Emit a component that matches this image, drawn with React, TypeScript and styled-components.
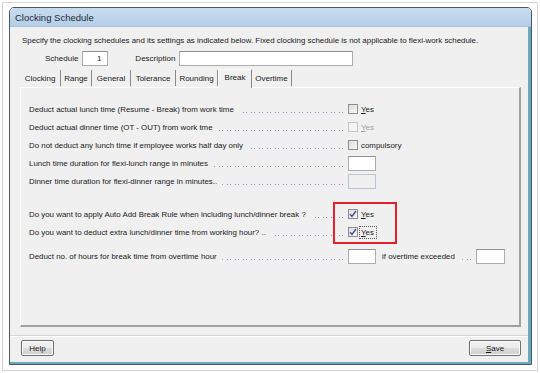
import React from "react";
import styled, { createGlobalStyle } from "styled-components";

const GlobalStyle = createGlobalStyle`
  html, body {
    margin: 0;
    padding: 0;
    background: #ffffff;
  }
  body {
    font-family: "Liberation Sans", Arial, sans-serif;
    color: #1a1a1a;
  }
  * {
    box-sizing: border-box;
  }
`;

const Page = styled.div`
  width: 540px;
  height: 373px;
  padding: 2px;
`;

const Frame = styled.div`
  height: 369px;
  border: 1px solid #d4d4d4;
  padding: 4px 5px 5px 6px;
`;

const Window = styled.div`
  height: 358px;
  display: flex;
  flex-direction: column;
  border: 1px solid #4b5864;
  border-radius: 5px 5px 0 0;
  overflow: hidden;
`;

const TitleBar = styled.div`
  height: 19px;
  flex-shrink: 0;
  display: flex;
  align-items: center;
  padding-left: 5px;
  font-size: 9.5px;
  color: #1e2a36;
  background: linear-gradient(#c9dcef, #b4cde7);
  border-bottom: 1px solid #a9c2dc;
`;

const Client = styled.div`
  flex: 1;
  display: flex;
  flex-direction: column;
  background: #f0f0f0;
  border-right: 3px solid #6aaabd;
  border-bottom: 2px solid #6aaabd;
  padding-top: 8px;
`;

const Intro = styled.div`
  margin-left: 12px;
  font-size: 7.9px;
  line-height: 12px;
  white-space: nowrap;
`;

const ScheduleRow = styled.div`
  display: flex;
  align-items: center;
  margin: 4px 0 0 35px;
  height: 15px;
  font-size: 8px;
`;

const FieldLabel = styled.span<{ $gap?: number }>`
  margin-left: ${(p) => p.$gap ?? 0}px;
  margin-right: 4px;
`;

const TextBox = styled.div<{ $w: number; $disabled?: boolean }>`
  width: ${(p) => p.$w}px;
  height: 15px;
  flex-shrink: 0;
  border: 1px solid ${(p) => (p.$disabled ? "#b7c5d3" : "#abadb3")};
  border-top-color: ${(p) => (p.$disabled ? "#b7c5d3" : "#8e9198")};
  background: ${(p) => (p.$disabled ? "#f0f0f0" : "#ffffff")};
  font-size: 8px;
  line-height: 13px;
  text-align: right;
  padding-right: 6px;
`;

const TabStrip = styled.div`
  display: flex;
  align-items: flex-end;
  height: 19px;
  margin: 2px 0 0 10px;
  font-size: 8px;
`;

const Tab = styled.div<{ $active?: boolean; $w: number }>`
  width: ${(p) => p.$w}px;
  height: ${(p) => (p.$active ? 19 : 16)}px;
  display: flex;
  align-items: center;
  justify-content: center;
  border-right: 1px solid #8a8a8a;
  border-top: ${(p) => (p.$active ? "1px solid #ffffff" : "none")};
  border-left: ${(p) => (p.$active ? "1px solid #ffffff" : "none")};
  padding-bottom: ${(p) => (p.$active ? 3 : 0)}px;
  margin-bottom: ${(p) => (p.$active ? -1 : 1)}px;
  background: #f0f0f0;
  position: relative;
  z-index: ${(p) => (p.$active ? 1 : 0)};
`;

const Panel = styled.div`
  position: relative;
  height: 240px;
  margin: 0 7px 0 10px;
  border-top: 1px solid #ffffff;
  border-left: 1px solid #ffffff;
  border-right: 2px solid #a0a0a0;
  border-bottom: 2px solid #a0a0a0;
  padding: 12px 0 0 8px;
  display: flex;
  flex-direction: column;
`;

const Group = styled.div<{ $gap: number }>`
  margin-top: ${(p) => p.$gap}px;
  display: flex;
  flex-direction: column;
`;

const Row = styled.div`
  height: 18px;
  display: flex;
  align-items: center;
  font-size: 7.9px;
  white-space: nowrap;
`;

const LabelCell = styled.div`
  width: 314px;
  display: flex;
  align-items: center;
`;

const Leader = styled.div`
  flex: 1;
  min-width: 0;
  height: 1px;
  margin: 6px 0 0 5px;
  background-image: repeating-linear-gradient(
    to left,
    #9c98b6 0 1px,
    transparent 1px 3px,
    #9c98b6 3px 4px,
    transparent 4px 8px
  );
`;

const Control = styled.div`
  margin-left: 5px;
  display: flex;
  align-items: center;
`;

const Box = styled.div<{ $disabled?: boolean }>`
  width: 10px;
  height: 10px;
  border: 1px solid ${(p) => (p.$disabled ? "#c4c4c4" : "#8e8f8f")};
  background: ${(p) =>
    p.$disabled ? "#f4f4f4" : "linear-gradient(135deg, #dcdcdc, #f8f8f8)"};
  display: flex;
  align-items: center;
  justify-content: center;
`;

const CheckText = styled.span<{ $disabled?: boolean; $focus?: boolean }>`
  margin-left: 1px;
  color: ${(p) => (p.$disabled ? "#a0a0a0" : "#1a1a1a")};
  padding: 1px 2px 1px 1px;
  border: 1px ${(p) => (p.$focus ? "dotted #555" : "solid transparent")};
`;

const AfterText = styled.span`
  margin: 0 5px 0 6px;
  display: flex;
  align-items: center;
  width: 89px;
`;

const Highlight = styled.div`
  position: absolute;
  left: 312px;
  top: 114px;
  width: 64px;
  height: 42px;
  border: 2px solid #e3202c;
`;

const Separator = styled.div`
  margin-top: 8px;
  height: 2px;
  border-top: 1px solid #d5d5d5;
  border-bottom: 1px solid #ffffff;
`;

const Footer = styled.div`
  display: flex;
  justify-content: space-between;
  margin: 3px 7px 0 11px;
`;

const Button = styled.div<{ $w: number }>`
  width: ${(p) => p.$w}px;
  height: 16px;
  border: 1px solid #707070;
  border-radius: 2px;
  background: linear-gradient(#f2f2f2 0%, #ebebeb 50%, #dddddd 51%, #cfcfcf 100%);
  box-shadow: inset 0 0 0 1px #fbfbfb;
  font-size: 8px;
  display: flex;
  align-items: center;
  justify-content: center;
`;

const Check = () => (
  <svg width="8" height="8" viewBox="0 0 8 8">
    <path d="M1 4.2 L3 6.4 L7 1" stroke="#3a4f8f" strokeWidth="1.4" fill="none" />
  </svg>
);

type Item = {
  label: string;
  kind: "check" | "input";
  text?: string;
  checked?: boolean;
  disabled?: boolean;
  focus?: boolean;
};

const LabelWithLeader = ({ label }: { label: string }) => (
  <LabelCell>
    <span>{label}</span>
    <Leader />
  </LabelCell>
);

const SettingRow = ({ item }: { item: Item }) => (
  <Row>
    <LabelWithLeader label={item.label} />
    <Control>
      {item.kind === "check" ? (
        <>
          <Box $disabled={item.disabled}>{item.checked && <Check />}</Box>
          <CheckText $disabled={item.disabled} $focus={item.focus}>
            {item.text === "Yes" ? (
              <>
                <u>Y</u>es
              </>
            ) : (
              item.text
            )}
          </CheckText>
        </>
      ) : (
        <TextBox $w={28} $disabled={item.disabled} />
      )}
    </Control>
  </Row>
);

const firstGroup: Item[] = [
  { label: "Deduct actual lunch time (Resume - Break) from work time", kind: "check", text: "Yes" },
  { label: "Deduct actual dinner time (OT - OUT) from work tme", kind: "check", text: "Yes", disabled: true },
  { label: "Do not deduct any lunch time if employee works half day only", kind: "check", text: "compulsory" },
  { label: "Lunch time duration for flexi-lunch range in minutes", kind: "input" },
  { label: "Dinner time duration for flexi-dinner range in minutes..", kind: "input", disabled: true },
];

const secondGroup: Item[] = [
  { label: "Do you want to apply Auto Add Break Rule when including lunch/dinner break ?", kind: "check", text: "Yes", checked: true },
  { label: "Do you want to deduct extra lunch/dinner time from working hour? ..", kind: "check", text: "Yes", checked: true, focus: true },
];

const tabs = [
  { name: "Clocking", w: 41 },
  { name: "Range", w: 31 },
  { name: "General", w: 39 },
  { name: "Tolerance", w: 45 },
  { name: "Rounding", w: 42 },
  { name: "Break", w: 34, active: true },
  { name: "Overtime", w: 40 },
];

export default function App() {
  return (
    <Page>
      <GlobalStyle />
      <Frame>
        <Window>
          <TitleBar>Clocking Schedule</TitleBar>
          <Client>
            <Intro>
              Specify the clocking schedules and its settings as indicated below. Fixed clocking
              schedule is not applicable to flexi-work schedule.
            </Intro>
            <ScheduleRow>
              <FieldLabel>Schedule</FieldLabel>
              <TextBox $w={26}>1</TextBox>
              <FieldLabel $gap={27}>Description</FieldLabel>
              <TextBox $w={174} />
            </ScheduleRow>
            <TabStrip>
              {tabs.map((t) => (
                <Tab key={t.name} $w={t.w} $active={t.active}>
                  {t.name}
                </Tab>
              ))}
            </TabStrip>
            <Panel>
              <Group $gap={0}>
                {firstGroup.map((item) => (
                  <SettingRow key={item.label} item={item} />
                ))}
              </Group>
              <Group $gap={15}>
                {secondGroup.map((item) => (
                  <SettingRow key={item.label} item={item} />
                ))}
              </Group>
              <Group $gap={6}>
                <Row>
                  <LabelWithLeader label="Deduct no. of hours for break time from overtime hour" />
                  <Control>
                    <TextBox $w={28} />
                    <AfterText>
                      <span>if overtime exceeded</span>
                      <Leader />
                    </AfterText>
                    <TextBox $w={29} />
                  </Control>
                </Row>
              </Group>
              <Highlight />
            </Panel>
            <Separator />
            <Footer>
              <Button $w={33}>Help</Button>
              <Button $w={52}>
                <span>
                  <u>S</u>ave
                </span>
              </Button>
            </Footer>
          </Client>
        </Window>
      </Frame>
    </Page>
  );
}
